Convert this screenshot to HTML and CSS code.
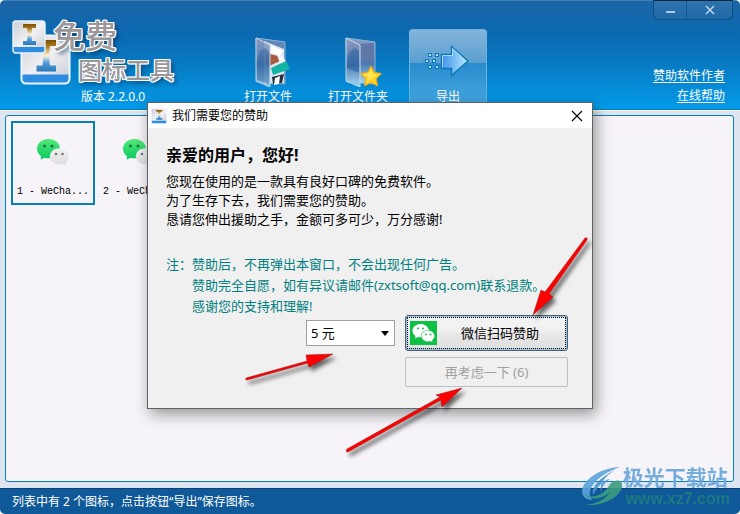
FILE: index.html
```html
<!DOCTYPE html>
<html lang="zh-CN">
<head>
    <meta charset="UTF-8">
    <meta name="viewport" content="width=device-width, initial-scale=1.0">
    <title>免费图标工具</title>
    <link rel="stylesheet" href="styles.css">
</head>
<body>
    <div class="app">
        <header class="header">
            <div class="brand">
                <svg class="brand-icon" viewBox="0 0 62 66">
                    <defs>
                        <linearGradient id="tile" x1="0" y1="0" x2="1" y2="1">
                            <stop offset="0" stop-color="#c9ced6"/>
                            <stop offset=".5" stop-color="#f1f1f3"/>
                            <stop offset="1" stop-color="#c4cad3"/>
                        </linearGradient>
                        <linearGradient id="beam" x1="0" y1="0" x2="0" y2="1">
                            <stop offset="0" stop-color="#805000"/>
                            <stop offset=".2" stop-color="#a87a20"/>
                            <stop offset=".5" stop-color="#fff4d8"/>
                            <stop offset=".72" stop-color="#4f9cd8"/>
                            <stop offset="1" stop-color="#2c78bb"/>
                        </linearGradient>
                        <g id="logoTile">
                            <rect x="1" y="1" width="32" height="32" rx="3" fill="url(#tile)"/>
                            <path d="M1 27h32v3q0 3-3 3H4q-3 0-3-3z" fill="#2c8de0"/>
                            <path d="M11 4h13v4h-4q-1 7 0 13h4v4H11v-4h4q1-6 0-13h-4z" fill="url(#beam)"/>
                            <rect x="1" y="1" width="32" height="32" rx="3" fill="none" stroke="#e9f4fc" stroke-width="1.4"/>
                        </g>
                    </defs>
                    <use href="#logoTile" transform="translate(8 14) scale(1.5)"/>
                    <use href="#logoTile"/>
                </svg>
                <div class="brand-top">免费</div>
                <div class="brand-name">图标工具</div>
                <div class="version">版本 2.2.0.0</div>
            </div>

            <nav class="toolbar">
                <button class="tool">
                    <svg class="tool-icon" viewBox="0 0 52 52">
                        <defs>
                            <linearGradient id="folder" x1="0" y1="0" x2="0" y2="1">
                                <stop offset="0" stop-color="#8f9dc0"/>
                                <stop offset=".55" stop-color="#4a78b0"/>
                                <stop offset="1" stop-color="#a9dcf4"/>
                            </linearGradient>
                        </defs>
                        <path d="M14 3l29 4v42l-28-2z" fill="#6286b6" stroke="#8fb2d2"/>
                        <path d="M22 6l20 8v34l-20 1z" fill="#dfe7ee"/>
                        <path d="M24 8l17 8-3 5-15-5z" fill="#fff"/>
                        <path d="M24 18l12 3 2 5-11 5-3-3z" fill="#a75a42"/>
                        <path d="M35 20l6 1 4 8-6 2z" fill="#f4f7f9"/>
                        <path d="M29 33l15-7 4 8-17 6z" fill="#13b4a5"/>
                        <path d="M30 42l12-3-2 9-9 1z" fill="#26313d"/>
                        <path d="M33 43l5-2-1 8-5 1z" fill="#fff"/>
                        <path d="M14 3l14 7v42l-14-6z" fill="url(#folder)" fill-opacity=".85" stroke="#b9d3e8"/>
                        <path d="M15 27q1-11 8-14 4 2 4 5v31l-12-4z" fill="#235b98" fill-opacity=".4"/>
                    </svg>
                    <span>打开文件</span>
                </button>
                <button class="tool">
                    <svg class="tool-icon" viewBox="0 0 52 52">
                        <path d="M14 3l29 4v42l-28-2z" fill="url(#folder)" stroke="#8fb2d2"/>
                        <path d="M28 9l14-1v18q-8 2-14-5z" fill="#5f77a6"/>
                        <path d="M14 3l14 7v42l-14-6z" fill="url(#folder)" fill-opacity=".9" stroke="#c1dbed"/>
                        <path d="M15 27q1-11 8-14 4 2 4 5v20l-12-5z" fill="#235b98" fill-opacity=".5"/>
                        <path d="M39 31l3.200 6.500 7.300 1-5.200 5.200 1.200 7.200-6.500-3.400-6.500 3.400 1.200-7.200-5.200-5.200 7.300-1z" fill="#ffd21e" stroke="#f0a51a"/>
                        <path d="M39 34l2 5 5 1-4 2-7 5 1-5-4-3 5-1z" fill="#fff47a" fill-opacity=".6"/>
                    </svg>
                    <span>打开文件夹</span>
                </button>
                <button class="tool active">
                    <svg class="tool-icon" viewBox="0 0 52 52">
                        <defs>
                            <linearGradient id="arrow" x1="0" y1="0" x2="1" y2="0">
                                <stop offset="0" stop-color="#3f92ea"/>
                                <stop offset="1" stop-color="#b7ebfc"/>
                            </linearGradient>
                        </defs>
                        <path d="M19.500 19.500h10v-8l16.500 14.500-16.500 14.500v-7h-10z" fill="url(#arrow)" stroke="#0876ba" stroke-width="1.400"/>
                        <path d="M20.500 32.500v-12h10v-7l13.500 12.500" fill="none" stroke="#bfe6fb" stroke-opacity=".8"/>
                        <g fill="#b7dff6" stroke="#0876ba">
                            <rect x="6.500" y="18.500" width="3" height="3"/>
                            <rect x="13.500" y="18.500" width="3" height="3"/>
                            <rect x="3.500" y="24.500" width="3" height="3"/>
                            <rect x="10.500" y="24.500" width="3" height="3"/>
                            <rect x="6.500" y="30.500" width="3" height="3"/>
                            <rect x="13.500" y="30.500" width="3" height="3"/>
                        </g>
                        <path d="M1 26h1M3 20h1M3 32h1" stroke="#2b86c0"/>
                    </svg>
                    <span>导出</span>
                </button>
            </nav>

            <div class="links">
                <a href="#">赞助软件作者</a>
                <a href="#">在线帮助</a>
            </div>

            <div class="window-controls">
                <button class="window-btn minimize" aria-label="最小化">
                    <svg width="10" height="10" viewBox="0 0 10 10"><path d="M1 7h9" stroke="#a9cce8" stroke-width="2"/></svg>
                </button>
                <button class="window-btn" aria-label="关闭">
                    <svg width="10" height="10" viewBox="0 0 10 10"><path d="M1 1l8 8M9 1L1 9" stroke="#c4dcee" stroke-width="1.300"/></svg>
                </button>
            </div>
        </header>

        <main class="workspace">
            <div class="icon-list">
                <div class="icon-item selected">
                    <svg class="wechat" viewBox="0 0 34 28">
                        <defs>
                            <linearGradient id="green" x1="0" y1="0" x2="0" y2="1">
                                <stop offset="0" stop-color="#55e878"/>
                                <stop offset="1" stop-color="#08c962"/>
                            </linearGradient>
                            <linearGradient id="gray" x1="0" y1="0" x2="0" y2="1">
                                <stop offset="0" stop-color="#f1f1f1"/>
                                <stop offset="1" stop-color="#dcdddf"/>
                            </linearGradient>
                            <g id="bubbles">
                                <path d="M12.500 1C6 1 1 5.300 1 10.700c0 3 1.500 5.800 4.200 7.700l-.6 3.400 3.800-2.100c1.300.4 2.700.6 4.100.6C19 20.300 24 16 24 10.700S19 1 12.500 1z" fill="url(#green)"/>
                                <circle cx="8.500" cy="8" r="1.500" fill="#16783f"/>
                                <circle cx="16" cy="8" r="1.500" fill="#16783f"/>
                                <path d="M23.500 10.300c-5.400 0-9.700 3.600-9.700 8s4.300 8.100 9.700 8.100c1.100 0 2.200-.2 3.200-.5l3.200 1.700-.6-2.900c2.300-1.500 3.700-3.800 3.700-6.400 0-4.400-4.200-8-9.500-8z" fill="url(#gray)"/>
                                <circle cx="20" cy="16" r="1.300" fill="#777"/>
                                <circle cx="26.500" cy="16" r="1.300" fill="#777"/>
                            </g>
                        </defs>
                        <use href="#bubbles"/>
                    </svg>
                    <span>1 - WeCha...</span>
                </div>
                <div class="icon-item">
                    <svg class="wechat" viewBox="0 0 34 28"><use href="#bubbles"/></svg>
                    <span>2 - WeCha...</span>
                </div>
            </div>
        </main>

        <footer class="status">列表中有 2 个图标，点击按钮“导出”保存图标。</footer>

        <div class="dialog" role="dialog" aria-labelledby="dialogTitle">
            <div class="dialog-title">
                <svg width="16" height="16" viewBox="0 0 34 34"><use href="#logoTile"/></svg>
                <span id="dialogTitle">我们需要您的赞助</span>
                <button class="dialog-close" aria-label="关闭窗口">
                    <svg width="12" height="12" viewBox="0 0 12 12"><path d="M1 1l10 10M11 1L1 11" stroke="#000" stroke-width="1.200"/></svg>
                </button>
            </div>
            <div class="dialog-body">
                <h1>亲爱的用户，您好!</h1>
                <p class="intro">您现在使用的是一款具有良好口碑的免费软件。<br>为了生存下去，我们需要您的赞助。<br>恳请您伸出援助之手，金额可多可少，万分感谢!</p>
                <div class="note">
                    <span>注：</span>
                    <p>赞助后，不再弹出本窗口，不会出现任何广告。<br>赞助完全自愿，如有异议请邮件(zxtsoft@qq.com)联系退款。<br>感谢您的支持和理解!</p>
                </div>
                <div class="actions">
                    <div class="amount">
                        <select aria-label="赞助金额">
                            <option>5 元</option>
                        </select>
                    </div>
                    <div class="buttons">
                        <button class="pay">
                            <svg width="27" height="24" viewBox="0 0 27 24">
                                <rect width="27" height="24" fill="#0cc143"/>
                                <path d="M10.500 3C6 3 2.500 6 2.500 9.700c0 2.200 1.200 4 3 5.300l-.5 2.500 3-1.400c1 .2 2 .3 3 .2-.6-4.700 3.300-7.600 7.800-7.400C18 5.500 14.700 3 10.500 3z" fill="#fff"/>
                                <path d="M18 9.500c-3.600 0-6.500 2.500-6.500 5.500s2.900 5.500 6.500 5.500c.8 0 1.600-.1 2.300-.4l2.200 1.200-.5-2.100c1.500-1 2.500-2.500 2.500-4.200 0-3-2.900-5.500-6.500-5.500z" fill="#fff"/>
                                <g fill="#0cc143">
                                    <circle cx="8" cy="7.500" r="1"/>
                                    <circle cx="13" cy="7.500" r="1"/>
                                    <circle cx="16" cy="13.500" r=".9"/>
                                    <circle cx="20.500" cy="13.500" r=".9"/>
                                </g>
                            </svg>
                            <span>微信扫码赞助</span>
                        </button>
                        <button class="later" disabled>再考虑一下 (6)</button>
                    </div>
                </div>
            </div>
        </div>

        <svg class="pointers" viewBox="0 0 740 514">
            <g fill="#fe0000" stroke="#8c1a1a" stroke-width=".5">
                <path d="M246 378l61-17-1-6 27-1-24 13-1-4-61 17q-2 0-1-2z"/>
                <path d="M585 238q3-1 2 2l-38 54 4 3-20 18 8-25 4 2z"/>
                <path d="M347 449l93-52-4-2 26-7-20 19-1-7-93 52q-3 0-1-3z"/>
            </g>
        </svg>

        <div class="watermark">
            <svg width="42" height="42" viewBox="0 0 42 42">
                <path d="M39 1C20 2 2 13 1 25c0 6 5 9 10 9-7-9 3-24 28-33z" fill="#5ba5dc"/>
                <path d="M34 4C18 12 10 21 12 29c6-11 13-16 17-16-4 2-9 8-9 14-2-11 5-17 14-23z" fill="#4a94d2"/>
                <path d="M2 27c8 7 21 3 27-9 5-5 13-5 12 3-2 9-16 19-37 18 11-1 20-5 25-13-8 8-20 9-27 1z" fill="#3c9d80"/>
            </svg>
            <div>
                <div class="watermark-name">极光下载站</div>
                <div class="watermark-url">www.xz7.com</div>
            </div>
        </div>
    </div>
</body>
</html>
```
FILE: styles.css
```css
* {
    box-sizing: border-box;
}

body {
    margin: 0;
    background: #fff;
    font-family: "Noto Sans", "Noto Sans CJK SC", sans-serif;
    font-size: 12px;
    line-height: 16px;
}

button, select {
    font: inherit;
    margin: 0;
}

.app {
    position: relative;
    display: flex;
    flex-direction: column;
    min-height: 100vh;
    overflow: hidden;
    border-radius: 5px;
    background: #dde6f0;
}

.header {
    position: relative;
    display: flex;
    height: 110px;
    padding: 0 15px 0 12px;
    border-top: 1px solid #3f83b8;
    border-bottom: 1px solid #087cb8;
    background: linear-gradient(#1c65a4, #0b69b0 30%, #067fc8 65%, #049bea);
    color: #fff;
}

/* Logo */
.brand {
    position: relative;
    width: 217px;
    padding-top: 18px;
}

.brand-icon {
    position: absolute;
    left: 0;
    top: 19px;
    width: 62px;
    height: 66px;
}

.brand-top,
.brand-name {
    position: relative;
    color: #9b979a;
    font-weight: 500;
    text-shadow: 1px 0 #fff, -1px 0 #fff, 0 1px #fff, 0 -1px #fff,
        1px 1px #fff, -1px -1px #fff, 1px -1px #fff, -1px 1px #fff,
        3px 3px 4px rgba(0, 40, 80, 0.7);
}

.brand-top {
    padding-left: 41px;
    font-size: 32px;
    line-height: 34px;
}

.brand-name {
    padding-left: 66px;
    font-size: 24px;
    line-height: 34px;
}

.version {
    padding-top: 2px;
    padding-left: 69px;
}

/* Toolbar */
.toolbar {
    display: flex;
    gap: 12px;
    padding-top: 28px;
}

.tool {
    display: flex;
    flex-direction: column;
    align-items: center;
    width: 78px;
    height: 78px;
    padding: 5px 0 0;
    border: 1px solid transparent;
    border-radius: 3px;
    background: none;
    color: #fff;
    white-space: nowrap;
}

.tool.active {
    border-color: #6db3dd;
    background: linear-gradient(#84b4da, #5a9fd0 43%, #2b8bcd 44%, #45a9e2);
}

.tool-icon {
    width: 52px;
    height: 52px;
    margin-bottom: 2px;
}

.links {
    display: flex;
    flex-direction: column;
    align-items: flex-end;
    gap: 4px;
    margin-left: auto;
    padding-top: 67px;
}

.links a {
    color: #fff;
    text-underline-offset: 2px;
}

.window-controls {
    position: absolute;
    top: -1px;
    right: 7px;
    display: flex;
    width: 80px;
    height: 20px;
    border: 1px solid #0a4f86;
    border-top-color: #0c243a;
    border-radius: 0 0 6px 6px;
    background: linear-gradient(#2e74ae, #1f6aa8);
}

.window-btn {
    display: flex;
    flex: 1;
    align-items: center;
    justify-content: center;
    padding: 0;
    border: 0;
    background: none;
}

.window-btn.minimize {
    flex: 0 0 33px;
    border-right: 1px solid #10568e;
}

/* Icon list */
.workspace {
    display: flex;
    flex: 1;
    padding: 4px 6px 6px 5px;
    border-top: 1px solid #fff;
}

.icon-list {
    display: flex;
    flex: 1;
    align-items: flex-start;
    gap: 2px;
    padding: 5px;
    border: 1px solid #087fb9;
    border-radius: 3px;
    background: #f6f4f8;
}

.icon-item {
    display: flex;
    flex-direction: column;
    align-items: center;
    width: 84px;
    height: 84px;
    padding-top: 15px;
    border: 2px solid transparent;
    font-family: "Liberation Mono", monospace;
    font-size: 10px;
    white-space: nowrap;
}

.icon-item.selected {
    border-color: #087fb9;
}

.wechat {
    width: 34px;
    height: 28px;
    margin-bottom: 18px;
}

.status {
    height: 26px;
    padding: 0 12px;
    border-top: 1px solid #0b4078;
    background: #105998;
    color: #fff;
    line-height: 25px;
}

/* Sponsor dialog */
.dialog {
    position: absolute;
    top: 102px;
    left: 0;
    right: 0;
    width: 446px;
    margin: 0 auto;
    border: 1px solid #5c6468;
    background: #f0f0f0;
    box-shadow: 3px 5px 14px rgba(0, 0, 0, 0.4);
    color: #000;
    font-size: 13px;
}

.dialog-title {
    display: flex;
    align-items: center;
    gap: 5px;
    height: 25px;
    padding: 0 9px 0 3px;
    background: #fff;
    font-size: 12px;
}

.dialog-close {
    display: flex;
    margin-left: auto;
    padding: 0;
    border: 0;
    background: none;
}

.dialog-body {
    padding: 16px 24px 21px 18px;
}

.dialog h1 {
    margin: 0 0 6px;
    font-size: 16px;
    line-height: 22px;
}

.dialog p {
    margin: 0;
}

.intro {
    line-height: 19px;
}

.note {
    display: flex;
    margin-top: 25px;
    color: #008080;
    line-height: 21px;
    white-space: nowrap;
}

.actions {
    display: flex;
    justify-content: flex-end;
    gap: 10px;
    margin-top: -2px;
}

.amount {
    position: relative;
    width: 89px;
    height: 26px;
    margin-top: 5px;
}

.amount::after {
    content: "";
    position: absolute;
    top: 11px;
    right: 6px;
    border: 4px solid transparent;
    border-top: 5px solid #000;
    border-bottom: 0;
    pointer-events: none;
}

.amount select {
    width: 100%;
    height: 26px;
    padding: 0 4px;
    border: 1px solid #a0a0a0;
    border-radius: 0;
    appearance: none;
    background: #fff;
    color: #000;
}

.buttons {
    display: flex;
    flex-direction: column;
    gap: 6px;
    width: 163px;
}

.pay {
    display: flex;
    align-items: center;
    height: 36px;
    padding: 0 4px;
    border: 1px solid #4d5f70;
    border-radius: 3px;
    outline: 1px dotted #000;
    outline-offset: -3px;
    background: linear-gradient(#f4f4f4, #efefef 48%, #e8e8e8 50%, #dedede);
    box-shadow: inset 0 0 0 1px #8cc3ea;
    color: #000;
}

.pay span {
    flex: 1;
    text-align: center;
}

.later {
    height: 30px;
    padding: 0;
    border: 1px solid #bfbfbf;
    border-radius: 2px;
    background: #f0f0f0;
    color: #a0a0a0;
}

/* Red arrows over the dialog */
.pointers {
    position: absolute;
    top: 0;
    left: 50%;
    width: 740px;
    height: 514px;
    margin-left: -370px;
    filter: drop-shadow(3px 4px 2px rgba(0, 0, 0, 0.6));
    pointer-events: none;
}

.watermark {
    position: absolute;
    right: 10px;
    bottom: 6px;
    display: flex;
    align-items: center;
    opacity: 0.9;
}

.watermark-name {
    color: #69a5da;
    font-size: 21px;
    font-weight: bold;
    line-height: 25px;
}

.watermark-url {
    padding-left: 3px;
    color: #1f7d80;
    font-family: "Liberation Sans", sans-serif;
    font-size: 16px;
    font-weight: bold;
    line-height: 18px;
}
```
